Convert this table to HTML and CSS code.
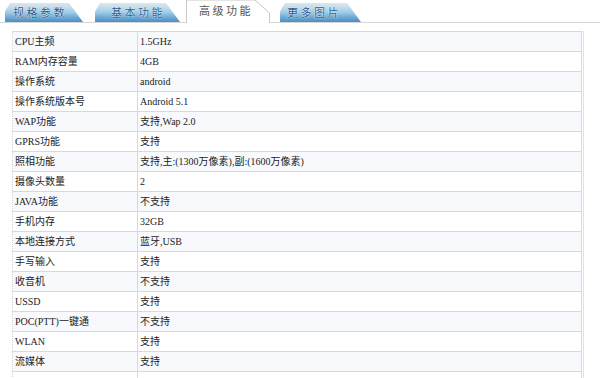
FILE: index.html
```html
<!DOCTYPE html>
<html lang="zh">
<head>
<meta charset="utf-8">
<link rel="stylesheet" href="styles.css">
</head>
<body>
<div class="tabs">
  <div class="tab tab-blue t1"><span class="tab-label">规格参数</span></div>
  <div class="tab tab-blue t2"><span class="tab-label">基本功能</span></div>
  <div class="tab tab-active t3">
    <svg class="tab-shape" width="85" height="23" viewBox="0 0 85 23"><path d="M0.5 23 V0 H69 L83.5 13 V23" fill="#fff" stroke="#c9c9c9" stroke-width="1"/></svg>
    <span class="tab-label">高级功能</span>
  </div>
  <div class="tab tab-blue t4"><span class="tab-label">更多图片</span></div>
</div>
<div class="wrap">
<table class="spec">
  <tr><td class="k">CPU主频</td><td class="v">1.5GHz</td></tr>
  <tr><td class="k">RAM内存容量</td><td class="v">4GB</td></tr>
  <tr><td class="k">操作系统</td><td class="v">android</td></tr>
  <tr><td class="k">操作系统版本号</td><td class="v">Android 5.1</td></tr>
  <tr><td class="k">WAP功能</td><td class="v">支持,Wap 2.0</td></tr>
  <tr><td class="k">GPRS功能</td><td class="v">支持</td></tr>
  <tr><td class="k">照相功能</td><td class="v">支持,主:(1300万像素),副:(1600万像素)</td></tr>
  <tr><td class="k">摄像头数量</td><td class="v">2</td></tr>
  <tr><td class="k">JAVA功能</td><td class="v">不支持</td></tr>
  <tr><td class="k">手机内存</td><td class="v">32GB</td></tr>
  <tr><td class="k">本地连接方式</td><td class="v">蓝牙,USB</td></tr>
  <tr><td class="k">手写输入</td><td class="v">支持</td></tr>
  <tr><td class="k">收音机</td><td class="v">不支持</td></tr>
  <tr><td class="k">USSD</td><td class="v">支持</td></tr>
  <tr><td class="k">POC(PTT)一键通</td><td class="v">不支持</td></tr>
  <tr><td class="k">WLAN</td><td class="v">支持</td></tr>
  <tr><td class="k">流媒体</td><td class="v">支持</td></tr>
  <tr><td class="k">&nbsp;</td><td class="v">&nbsp;</td></tr>
</table>
</div>
</body>
</html>
```
FILE: styles.css
```css
html, body {
  margin: 0;
  padding: 0;
  background: #fff;
  overflow: hidden;
}
body {
  width: 600px;
  height: 378px;
  font-family: "Liberation Serif", "Noto Sans CJK SC", serif;
  font-size: 10px;
  color: #222;
}
.tabs {
  display: flex;
  align-items: flex-end;
  height: 22px;
  border-bottom: 1px solid #d6d6d6;
}
.tab {
  height: 19px;
  display: grid;
  flex: none;
}
.tab-blue {
  background: linear-gradient(to bottom, #dbe7ee 0%, #c3dbea 25%, #9dcbe8 50%, #6eaad6 75%, #4d8dc1 100%);
  clip-path: polygon(0 45%, 5px 0, calc(100% - 14px) 0, 100% 100%, 0 100%);
}
.tab-label {
  grid-area: 1 / 1;
  align-self: center;
  justify-self: start;
  font-family: "Noto Sans CJK SC", sans-serif;
  font-size: 11px;
  letter-spacing: 2.5px;
  line-height: 13px;
}
.tab-blue .tab-label {
  color: #1e5a8c;
  text-shadow: 0 0 1px #fff, 0 0 1px #fff;
  padding-left: 8px;
}
.t1 { margin-left: 5px; width: 78px; }
.t2 { margin-left: 12px; width: 85px; }
.t2 .tab-label { padding-left: 16px; }
.t3 {
  margin-left: 6px;
  width: 85px;
  height: 23px;
  margin-bottom: -1px;
}
.tab-shape {
  grid-area: 1 / 1;
  display: block;
}
.tab-active .tab-label {
  color: #555;
  padding-left: 13px;
  align-self: start;
  margin-top: 4px;
}
.t4 { margin-left: 9px; width: 81px; }
.t4 .tab-label { padding-left: 7px; }

.wrap {
  margin: 8px 0 0 12px;
  width: 571px;
  border-right: 1px solid #e2e2e2;
}
.spec {
  width: 570px;
  border-collapse: collapse;
  table-layout: fixed;
}
.spec td {
  height: 19px;
  padding: 0 2px;
  border-top: 1px solid #d9d9d9;
  border-bottom: 1px solid #d9d9d9;
  white-space: nowrap;
  line-height: 12px;
  vertical-align: middle;
}
.spec tr:nth-child(odd) td { background: #f8f9fc; }
.spec td.k {
  width: 120px;
  border-left: 1px dotted #cfcfcf;
  border-right: 1px solid #d9d9d9;
}
.spec td.v {
  border-right: 1px solid #d9d9d9;
}
```
